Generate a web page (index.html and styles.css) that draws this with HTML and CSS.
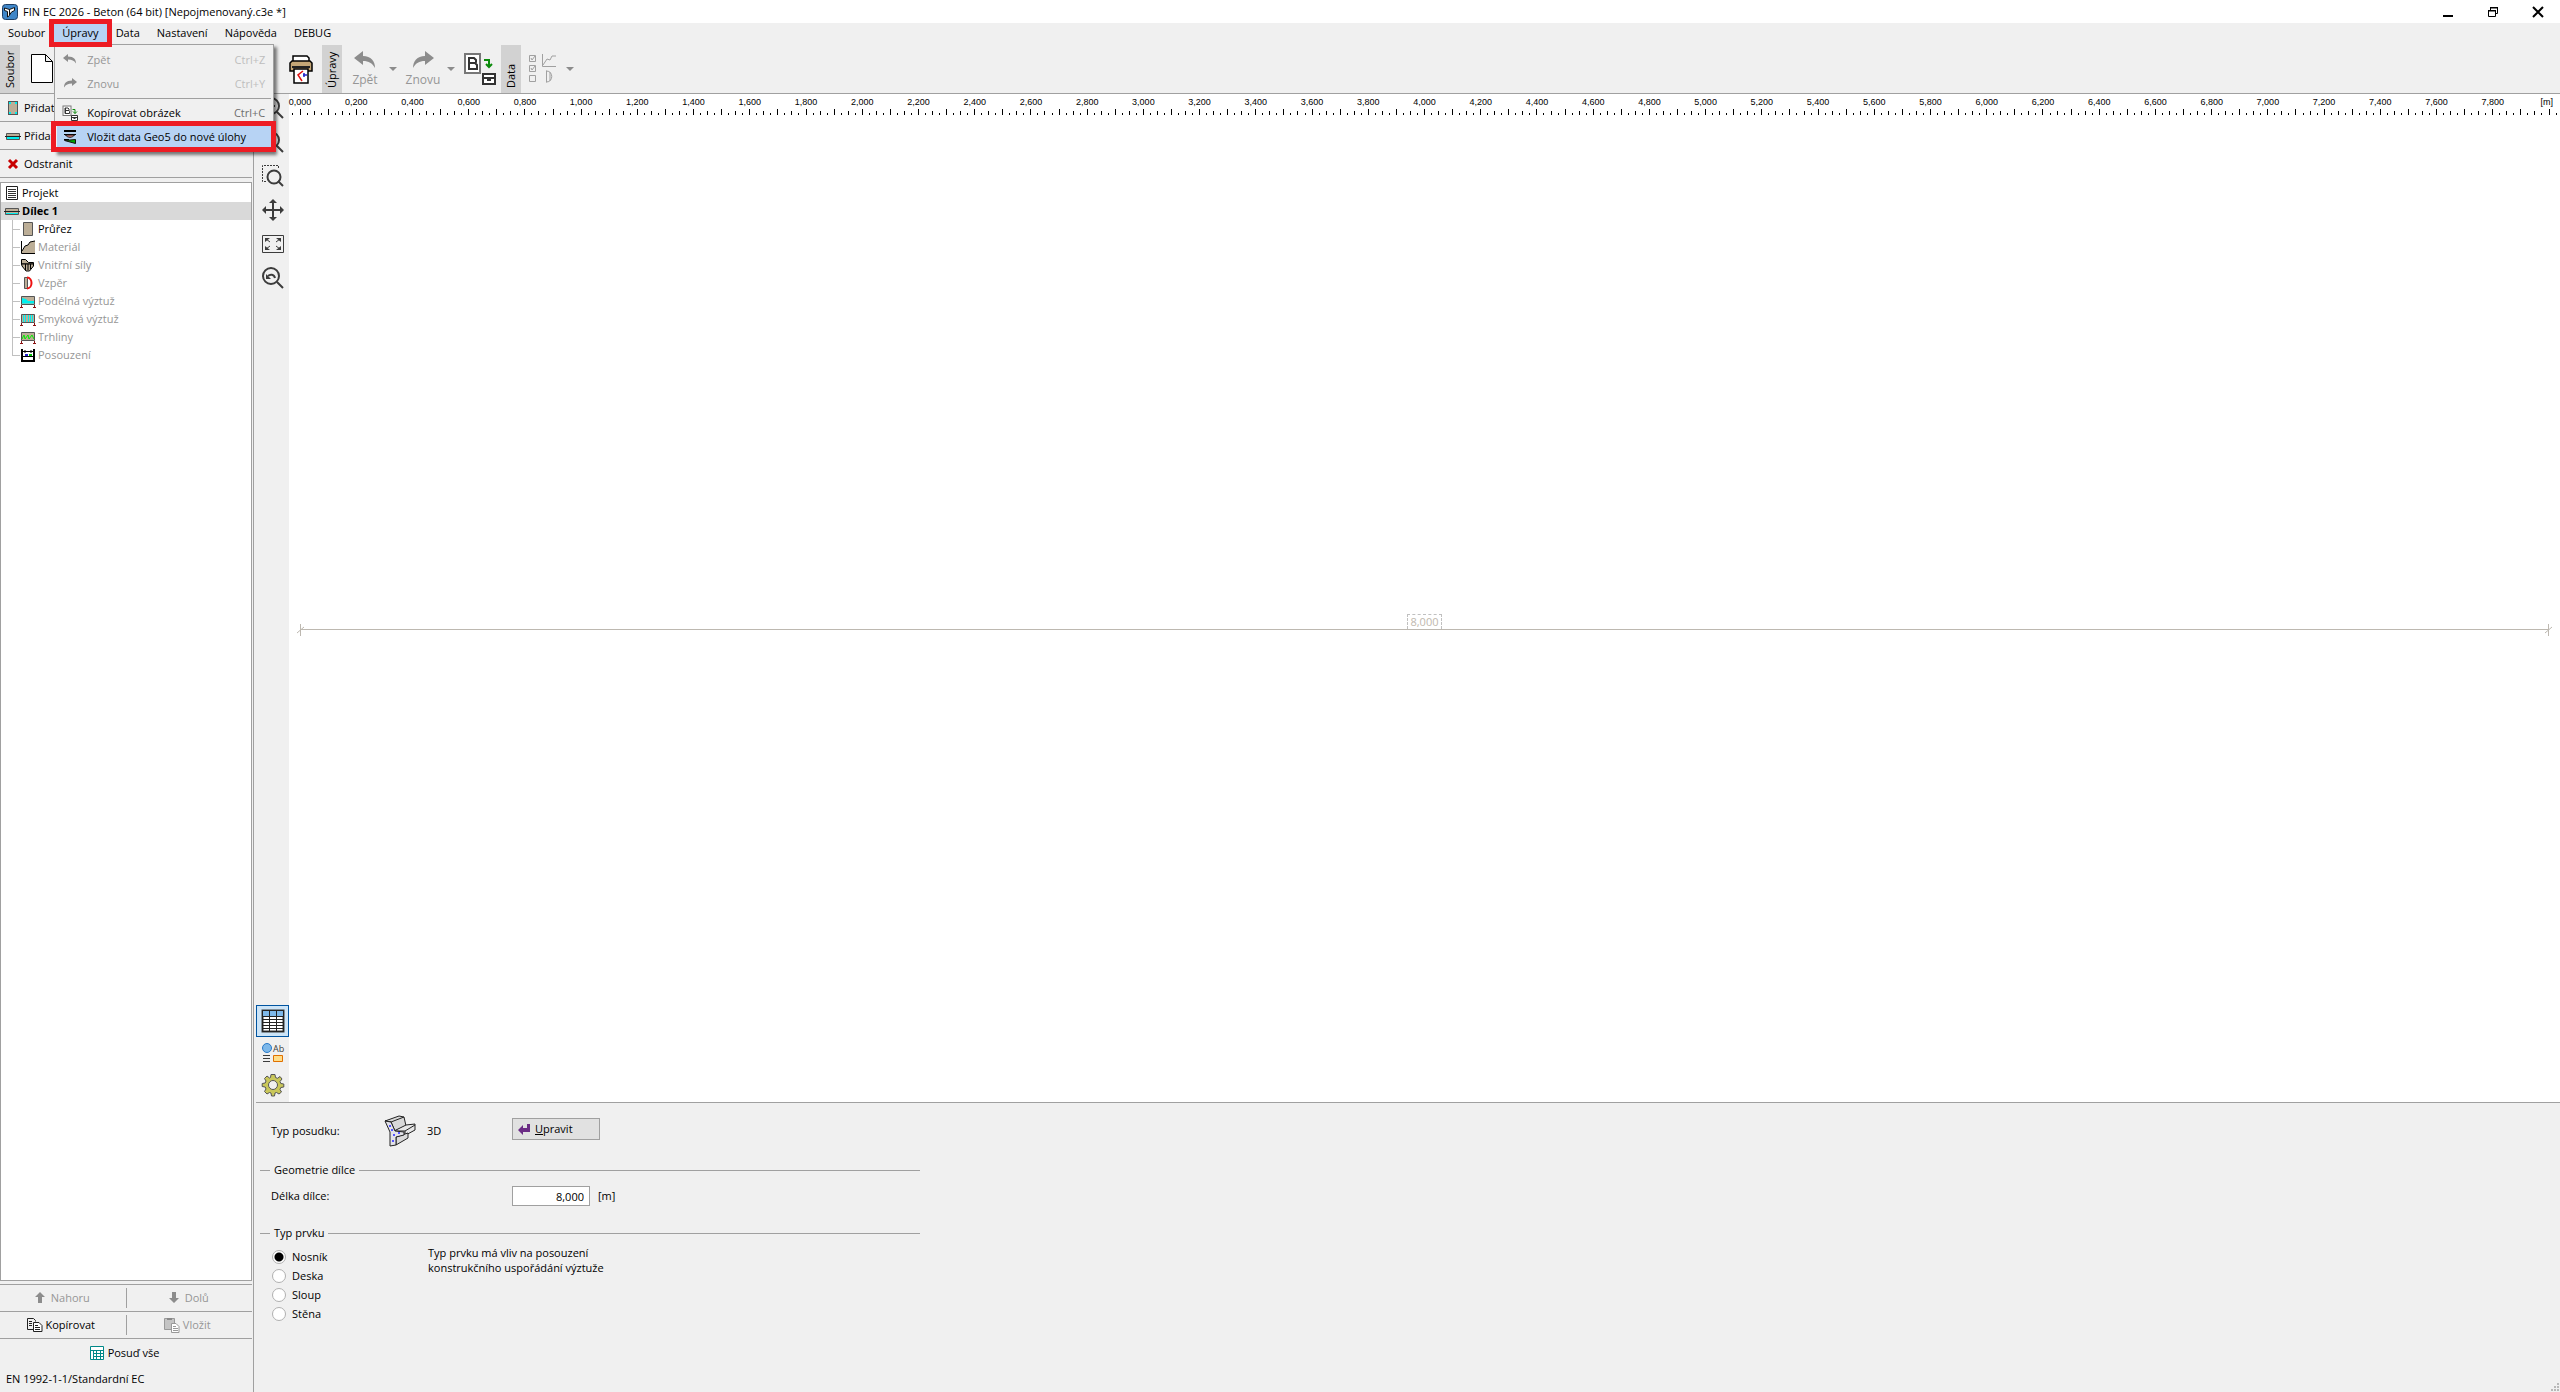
FILE: index.html
```html
<!DOCTYPE html>
<html lang="cs">
<head>
   <meta charset="utf-8">
   <title>FIN EC 2026 - Beton</title>
   <link rel="stylesheet" href="styles.css">
</head>
<body>
   <header class="titlebar">
      <svg class="app-icon" width="16" height="16" viewBox="0 0 16 16"><rect x=".5" y=".5" width="15" height="15" rx="3" fill="#3f86c8" stroke="#1d3f66"/><path d="M2.500 4l5 1.500v6l-2 1.500V7.500l-3-1zM7.500 5.500l5-2v3L9.500 8l-2 3z" fill="#fff" stroke="#111"/></svg>
      <span class="title">FIN EC 2026 - Beton (64 bit) [Nepojmenovaný.c3e *]</span>
      <div class="window-buttons">
         <button aria-label="Minimalizovat"><svg width="12" height="12" viewBox="0 0 12 12"><path d="M1 9h10v2H1z"/></svg></button>
         <button aria-label="Obnovit"><svg width="12" height="12" viewBox="0 0 12 12"><path d="M1.500 4.500h7v6h-7zM3.500 4V1.500h7v6H9" fill="none" stroke="#000"/><path d="M1 4h8v1.500H1zM3 1h8v1.500H3z"/></svg></button>
         <button aria-label="Zavřít"><svg width="12" height="12" viewBox="0 0 12 12"><path d="M1 1l10 10M11 1L1 11" stroke="#000" stroke-width="2"/></svg></button>
      </div>
   </header>

   <nav class="menubar">
      <button>Soubor</button>
      <div class="menu-open">
         <button class="active">Úpravy</button>
         <div class="menu">
            <button class="item" disabled><svg width="16" height="16" viewBox="0 0 16 16"><path d="M1 6l5-4v2.500c6 0 8 3 8 7-2-3-4-4-8-4V10z" fill="#8c8c8c"/></svg>Zpět<kbd>Ctrl+Z</kbd></button>
            <button class="item" disabled><svg width="16" height="16" viewBox="0 0 16 16"><path d="M15 6l-5-4v2.500c-6 0-8 3-8 7 2-3 4-4 8-4V10z" fill="#8c8c8c"/></svg>Znovu<kbd>Ctrl+Y</kbd></button>
            <hr>
            <button class="item"><svg width="16" height="16" viewBox="0 0 32 32"><rect x="2" y="2" width="16" height="19" fill="#fff" stroke="#777" stroke-width="2"/><path d="M6 6h6l2 2v3H7h7l1 2v4H6zM7 6v11" fill="none" stroke="#333" stroke-width="2"/><path d="M21 9h5v8m-4-4l4 4 4-4" fill="none" stroke="#0a8a0a" stroke-width="2"/><path d="M19 21h12v10H19zM19 25h12M23 27h4" fill="#fff" stroke="#333" stroke-width="2"/></svg>Kopírovat obrázek<kbd>Ctrl+C</kbd></button>
            <button class="item chosen"><svg width="16" height="16" viewBox="0 0 16 16"><path d="M2 1h12v2H2zM2 5h12v1H2zM2 10h5v1H2z"/><path d="M3.500 6c2 3 7 3 9 0z" fill="#e88" stroke="#111"/><path d="M2.500 11.500l11 3v-4z" fill="#0a0" stroke="#111"/></svg>Vložit data Geo5 do nové úlohy</button>
         </div>
         <div class="frame frame-menu"></div>
         <div class="frame frame-item"></div>
      </div>
      <button>Data</button>
      <button>Nastavení</button>
      <button>Nápověda</button>
      <button>DEBUG</button>
   </nav>

   <div class="toolbar">
      <span class="tab">Soubor</span>
      <button class="tool-new" aria-label="Nový"><svg width="24" height="32" viewBox="0 0 24 32"><path d="M1.500 1.500h14l7 7v21h-21zM15.500 1.500v7h7" fill="#fff" stroke="#000"/></svg></button>
      <button class="tool-print" aria-label="Tisk"><svg width="24" height="30" viewBox="0 0 24 30"><path d="M4 8V2h14l2 2v4" fill="#fff" stroke="#000" stroke-width="1.500"/><path d="M1 9l2-2h18l2 2v8H1z" fill="#c4a676" stroke="#000" stroke-width="1.500"/><path d="M3 12h18v2H3z" fill="#222"/><path d="M5 15h14v14H5z" fill="#fff" stroke="#000" stroke-width="1.500"/><path d="M14 17l-5 4 4 6" fill="none" stroke="#e01010" stroke-width="1.500"/><path d="M14 21h4M15 19v4" stroke="#22c" stroke-width="1.500"/></svg></button>
      <span class="tab">Úpravy</span>
      <button class="tool" disabled><svg width="24" height="20" viewBox="0 0 24 20"><path d="M1 8l9-7v5c8 0 12 5 12 12-3-5-6-7-12-7v4z" fill="#8c8c8c"/></svg>Zpět</button>
      <span class="caret"></span>
      <button class="tool" disabled><svg width="24" height="20" viewBox="0 0 24 20"><path d="M23 8l-9-7v5C6 6 2 11 2 18c3-5 6-7 12-7v4z" fill="#8c8c8c"/></svg>Znovu</button>
      <span class="caret"></span>
      <button class="tool-copy" aria-label="Kopírovat obrázek"><svg width="32" height="32" viewBox="0 0 32 32"><rect x="1" y="1" width="15" height="19" fill="#fff" stroke="#777" stroke-width="2"/><path d="M5 5h5l2 2v2l-1 1 2 2v4H5zM6 10h5" fill="none" stroke="#333" stroke-width="2"/><path d="M20 7h5v7m-3-3l3 3 3-3" fill="none" stroke="#0a8a0a" stroke-width="2"/><path d="M19 21h12v10H19zM19 25h12M23 27h4" fill="#fff" stroke="#333" stroke-width="2"/></svg></button>
      <span class="tab">Data</span>
      <button class="tool-data" disabled aria-label="Data"><svg width="28" height="32" viewBox="0 0 28 32"><path d="M1.500 2.500h6v6h-6zM1.500 12.500h6v6h-6zM1.500 22.500h6v6h-6zM3 5l1 2 3-4M3 15l1 2 3-4M14.500 1v12.500H28M15 12l4-6 3 1 2-4h4M18.500 17.500v12M18.500 18c7 0 7 11 0 11M22 19v9" fill="none" stroke="#a0a0a0"/></svg></button>
      <span class="caret"></span>
   </div>

   <div class="main">
      <aside class="sidebar">
         <div class="commands">
            <button><svg width="16" height="16" viewBox="0 0 16 16"><rect x="3.500" y="1.500" width="9" height="13" fill="#bcae97" stroke="#555"/><path d="M4 3h2M10 3h2M4 13h2M10 13h2" stroke="#0ee" stroke-width="2"/></svg>Přidat</button>
            <button><svg width="16" height="16" viewBox="0 0 16 16"><path d="M1.500 5.500h13v6h-13z" fill="#bcae97" stroke="#555"/><path d="M2 10h12" stroke="#0ee" stroke-width="2"/><path d="M0 8.500h16" stroke="#222"/></svg>Přidat</button>
            <button><svg width="16" height="16" viewBox="0 0 16 16"><path d="M4 4l8 8M12 4l-8 8" stroke="#c80000" stroke-width="3"/></svg>Odstranit</button>
         </div>
         <ul class="tree">
            <li><svg width="16" height="16" viewBox="0 0 16 16"><path d="M2.500 1.500h11v13h-11z" fill="#fff" stroke="#222"/><path d="M4 4.500h8M4 6.500h8M4 8.500h8M4 10.500h8M4 12.500h8" stroke="#333"/></svg>Projekt</li>
            <li class="selected"><svg width="16" height="16" viewBox="0 0 16 16"><path d="M1.500 5.500h13v6h-13z" fill="#bcae97" stroke="#555"/><path d="M2 10.500h12" stroke="#0ee"/><path d="M0 8.500h16" stroke="#222"/></svg>Dílec 1</li>
            <li class="child ready"><svg width="16" height="16" viewBox="0 0 16 16"><path d="M3.500 1.500h9v13h-9z" fill="#bcae97" stroke="#555"/></svg>Průřez</li>
            <li class="child"><svg width="16" height="16" viewBox="0 0 16 16"><path d="M2 14V12l3-5 3-1 2-3 5-1v12z" fill="#bcae97"/><path d="M1.500 2v12.500H15M2 12l3-5 3-1 2-3 5-1" fill="none" stroke="#000"/></svg>Materiál</li>
            <li class="child"><svg width="16" height="16" viewBox="0 0 16 16"><path d="M1.500 7V2.500h4l3 3h5V7z" fill="#bcae97" stroke="#000"/><path d="M1.500 7h12v2l-4 5H6L2 9z" fill="#bcae97" stroke="#000"/><path d="M5.500 7v6M8 7v6M10.500 7v5" stroke="#000"/></svg>Vnitřní síly</li>
            <li class="child"><svg width="16" height="16" viewBox="0 0 16 16"><path d="M4.500 2.500h3v11h-3z" fill="#bcae97" stroke="#555"/><path d="M7 2.500c6 0 6 11 0 11" fill="none" stroke="#e11" stroke-width="2"/></svg>Vzpěr</li>
            <li class="child"><svg width="16" height="16" viewBox="0 0 16 16"><path d="M1.500 3.500h13v8h-13z" fill="#bcae97" stroke="#555"/><path d="M2 5l4 1 2 2h6v2.500H2z" fill="#0ee"/><path d="M0 14.500h3M13 14.500h3M1.500 12v2M14.500 12v2" stroke="#811"/></svg>Podélná výztuž</li>
            <li class="child"><svg width="16" height="16" viewBox="0 0 16 16"><path d="M1.500 3.500h13v8h-13z" fill="#bcae97" stroke="#555"/><path d="M3.500 4v7M5.500 4v7M8.500 4v7M10.500 4v7M12.500 4v7" stroke="#0ee"/><path d="M0 14.500h3M13 14.500h3M1.500 12v2M14.500 12v2" stroke="#811"/></svg>Smyková výztuž</li>
            <li class="child"><svg width="16" height="16" viewBox="0 0 16 16"><path d="M1.500 3.500h13v8h-13z" fill="#bcae97" stroke="#555"/><path d="M2 10l2-4 1 4 3-4 1 4 3-4 2 4" fill="none" stroke="#0e0"/><path d="M0 14.500h3M13 14.500h3M1.500 12v2M14.500 12v2" stroke="#811"/></svg>Trhliny</li>
            <li class="child"><svg width="16" height="16" viewBox="0 0 16 16"><path d="M2 2v12h12V2" fill="#fff" stroke="#000" stroke-width="2"/><path d="M2 4.500h12M2 9.500h12M5 3v3M11 3v3" stroke="#000"/><path d="M5 8h3" stroke="#22c" stroke-width="2"/><path d="M9 8h3" stroke="#0b0" stroke-width="2"/></svg>Posouzení</li>
         </ul>
         <div class="actions">
            <div class="pair">
               <button disabled><svg width="16" height="16" viewBox="0 0 16 16"><path d="M8 2l5 5h-3v6H6V7H3z" fill="#8c8c8c"/></svg>Nahoru</button>
               <button disabled><svg width="16" height="16" viewBox="0 0 16 16"><path d="M8 13l5-5h-3V2H6v6H3z" fill="#8c8c8c"/></svg>Dolů</button>
            </div>
            <div class="pair">
               <button><svg width="16" height="16" viewBox="0 0 16 16"><path d="M6 12.500H.5v-11h6l2 2v1M2 4.500h3M2 6.500h3M2 8.500h3" fill="none" stroke="#222"/><path d="M6.500 5.500h5.500l3 3v6H6.500z" fill="#fff" stroke="#222"/><path d="M8 8.500h3M8 10.500h5M8 12.500h5" stroke="#222"/></svg>Kopírovat</button>
               <button disabled><svg width="16" height="16" viewBox="0 0 16 16"><path d="M.5 1.500h10v11H.5z" fill="#c4c4c4" stroke="#999"/><path d="M3 1h5v2H3z" fill="#888"/><path d="M7.500 6.500H12l3 3v6H7.500z" fill="#fff" stroke="#999"/><path d="M9 9.500h3M9 11.500h5M9 13.500h5" stroke="#999"/></svg>Vložit</button>
            </div>
            <button class="check-all"><svg width="16" height="16" viewBox="0 0 16 16"><path d="M1.500 1.500h13v13h-13z" fill="#fff" stroke="#088"/><path d="M1 5.500h14M4 8.500h11M4 11.500h11M4.500 5v9M7.500 5v9M11.500 5v9" stroke="#088"/></svg>Posuď vše</button>
         </div>
         <footer class="status">EN 1992-1-1/Standardní EC</footer>
      </aside>

      <section class="workspace">
         <div class="view">
            <div class="view-tools">
               <button aria-label="Přiblížit"><svg width="24" height="24" viewBox="0 0 24 24"><circle cx="10" cy="10" r="8"/><path d="M16 16l6 6M6 10h8M10 6v8"/></svg></button>
               <button aria-label="Oddálit"><svg width="24" height="24" viewBox="0 0 24 24"><circle cx="10" cy="10" r="8"/><path d="M16 16l6 6M6 10h8"/></svg></button>
               <button aria-label="Výřez"><svg width="24" height="24" viewBox="0 0 24 24"><path d="M5 17.500H1.500v-16h16V5" stroke-width="1" stroke-dasharray="2 1"/><circle cx="13" cy="13" r="6.500"/><path d="M17 17l5 5"/></svg></button>
               <button aria-label="Posun"><svg width="24" height="24" viewBox="0 0 24 24"><path d="M12 3v18M3 12h18"/><path class="solid" d="M12 1l4 4H8zM12 23l4-4H8zM1 12l4-4v8zM23 12l-4-4v8z"/></svg></button>
               <button aria-label="Vše"><svg width="24" height="24" viewBox="0 0 24 24"><path d="M1.500 3.500h21v17h-21z" stroke-width="1"/><path d="M5 7l4 3M19 7l-4 3M5 17l4-3M19 17l-4-3" stroke-width="1"/><path class="solid" d="M4 6h5l-5 4zM20 6h-5l5 4zM4 18h5l-5-4zM20 18h-5l5-4z"/></svg></button>
               <button aria-label="Předchozí pohled"><svg width="24" height="24" viewBox="0 0 24 24"><circle cx="10" cy="10" r="8"/><path d="M16 16l6 6M7 10c2-2 6-2 7 2"/><path class="solid" d="M5 8v5h5z"/></svg></button>
               <div class="view-modes">
                  <button class="pressed" aria-label="Tabulky"><svg width="24" height="24" viewBox="0 0 24 24"><path d="M1.500 1.500h21v21h-21z" fill="#fff"/><path d="M2 2h20v5H2z" fill="#7db8ea" stroke="none"/><path d="M1.500 1.500h21v21h-21zM1 7.500h22M1 10.500h22M1 13.500h22M1 16.500h22M1 19.500h22M8.500 1v22M15.500 1v22" fill="none" stroke="#222" stroke-width="1"/></svg></button>
                  <button aria-label="Popisy"><svg width="24" height="24" viewBox="0 0 24 24"><circle cx="6" cy="7" r="4.500" fill="#7db8ea" stroke="#2a7ac8" stroke-width="1"/><text x="12" y="11">Ab</text><path d="M2 14.500h7M2 17.500h7M2 20.500h7" stroke-width="1"/><path d="M12.500 14.500h9v6h-9z" fill="#fd8" stroke="#e07000" stroke-width="1"/></svg></button>
                  <button aria-label="Nastavení zobrazení"><svg width="24" height="24" viewBox="0 0 24 24"><path d="M10 1.500h4l.5 3 2 .8L19 3.500 21 6l-2 2.500.8 2 3 .5v3l-3 .5-.8 2L20.500 19 18 21l-2.500-1.500-1.500.5-.5 3h-3l-.5-3-1.500-.5L6 21 3.500 18.500 5 16l-.8-2-3-.5v-3l3-.5.8-2L3.500 5.500 6 3l2.500 2 1-.5z" fill="#c9c75a" stroke="#555" stroke-width="1"/><circle cx="12" cy="12" r="4.500" fill="#f0f0f0" stroke="#555" stroke-width="1"/></svg></button>
               </div>
            </div>
            <div class="canvas">
               <div class="ruler">
                  <svg id="scale" class="scale"></svg>
                  <span class="unit">[m]</span>
               </div>
               <div class="drawing">
                  <span class="dim-value">8,000</span>
                  <div class="dim-line"><svg width="9" height="12" viewBox="0 0 9 12"><path d="M4.500 0v12M1 9l7-6"/></svg><svg width="9" height="12" viewBox="0 0 9 12"><path d="M4.500 0v12M1 9l7-6"/></svg></div>
               </div>
            </div>
         </div>

         <form class="properties">
            <div class="row row-type">
               <span class="label">Typ posudku:</span>
               <svg width="32" height="32" viewBox="0 0 32 32" stroke="#222" stroke-linejoin="round"><path d="M1 6l14-5 5 1 2 9-11 5-4-9z" fill="#d8d8d8"/><path d="M7 7l13-5M1 6l6 1" fill="none"/><path d="M10 16l12-6 9-1v6l-11 6-9-1z" fill="#e6e6e6"/><path d="M11 16l10 0 10-6M21 16v5" fill="none"/><path d="M12 22l12-4v5l-12 7z" fill="#dadada"/><path d="M1 6l6 1 4 9 9 1v3l-8 2v8l-6 1V17z" fill="#e2e2e8"/><path d="M5 10h2v2H5zM7 14h2v2H7zM9 19h2v2H9zM14 17h2v2h-2zM8 25h2v2H8z" fill="#55f" stroke="none"/></svg>
               <span class="type-name">3D</span>
               <button type="button" class="edit"><svg width="14" height="14" viewBox="0 0 14 14"><path d="M1 8l5-5v3h4V2h3v8H6v3z" fill="#6b2c85"/></svg><span><u>U</u>pravit</span></button>
            </div>
            <fieldset>
               <legend>Geometrie dílce</legend>
               <div class="row row-length">
                  <label class="label" for="length">Délka dílce:</label>
                  <input type="text" id="length" value="8,000">
                  <span>[m]</span>
               </div>
            </fieldset>
            <fieldset>
               <legend>Typ prvku</legend>
               <div class="row row-kind">
                  <div class="kinds">
                     <label><input type="radio" name="kind" checked>Nosník</label>
                     <label><input type="radio" name="kind">Deska</label>
                     <label><input type="radio" name="kind">Sloup</label>
                     <label><input type="radio" name="kind">Stěna</label>
                  </div>
                  <p>Typ prvku má vliv na posouzení<br>konstrukčního uspořádání výztuže</p>
               </div>
            </fieldset>
            <svg class="grip" width="10" height="10" viewBox="0 0 10 10"><path d="M7 1h2v2H7zM7 4h2v2H7zM4 4h2v2H4zM7 7h2v2H7zM4 7h2v2H4zM1 7h2v2H1z" fill="#b8b8b8"/></svg>
         </form>
      </section>
   </div>
   <script src="script.js"></script>
</body>
</html>
```
FILE: styles.css
```css
* { box-sizing: border-box; }
body
{
   display: flex;
   flex-direction: column;
   height: 100vh;
   margin: 0;
   overflow: hidden;
   background: #f0f0f0;
   color: #000;
   font: 11px/16px "Open Sans", "Noto Sans", sans-serif;
}
svg { flex: none; }
button
{
   display: flex;
   align-items: center;
   padding: 0;
   border: 0;
   background: none;
   color: inherit;
   font: inherit;
}
button:disabled { color: #969696; }

/* title bar */
.titlebar
{
   display: flex;
   align-items: center;
   gap: 5px;
   height: 23px;
   padding: 0 16px 0 2px;
   background: #fff;
}
.window-buttons
{
   display: flex;
   gap: 33px;
   margin-left: auto;
}

/* menu */
.menubar
{
   display: flex;
   align-items: center;
   gap: 1px;
   height: 22px;
   padding-bottom: 2px;
}
.menubar > button, .menu-open > button
{
   height: 18px;
   padding: 0 8px;
}
.menu-open { position: relative; }
.menu-open > .active { background: #b7d3f4; }
.menu
{
   position: absolute;
   z-index: 2;
   top: 20px;
   left: 0;
   width: 220px;
   height: 108px;
   padding: 3px 2px;
   border: 1px solid #a0a0a0;
   background: #f0f0f0;
   box-shadow: 3px 3px 3px rgba(0, 0, 0, .5);
}
.menu .item
{
   width: 100%;
   height: 24px;
   padding: 0 6px 0 5px;
   gap: 9px;
}
.menu .chosen { background: #b7d3f4; }
.menu hr
{
   height: 1px;
   margin: 2px 0;
   border: 0;
   background: #a0a0a0;
}
kbd
{
   margin-left: auto;
   color: #6e6e6e;
   font: inherit;
}
.item:disabled kbd { color: #bebebe; }
.frame
{
   position: absolute;
   z-index: 3;
   border: 5px solid #ed1c24;
}
.frame-menu { inset: -5px; }
.frame-item
{
   top: 97px;
   left: -3px;
   width: 225px;
   height: 31px;
}

/* toolbar */
.toolbar
{
   display: flex;
   align-items: center;
   height: 49px;
   border-bottom: 1px solid #a0a0a0;
}
.tab
{
   align-self: stretch;
   width: 20px;
   padding-top: 5px;
   background: #d2d2d2;
   line-height: 20px;
   writing-mode: vertical-rl;
   transform: rotate(180deg);
}
.tool-new { margin-left: 10px; }
.tool-print { margin: 0 9px 0 235px; }
.tool
{
   flex-direction: column;
   width: 46px;
   gap: 2px;
   font-size: 12px;
}
.caret
{
   width: 8px;
   margin: 0 3px 0 1px;
   border: 4px solid transparent;
   border-top-color: #8c8c8c;
   border-bottom: 0;
}
.tool-copy { margin: 0 5px 0 6px; }
.tool-data { margin: 0 9px 0 7px; }

/* left panel */
.main
{
   display: flex;
   flex: 1;
   min-height: 0;
}
.sidebar
{
   display: flex;
   flex-direction: column;
   flex: none;
   width: 254px;
   padding-right: 1px;
   border-right: 1px solid #a0a0a0;
}
.commands button
{
   width: 100%;
   height: 28px;
   padding-left: 5px;
   gap: 3px;
   border-bottom: 1px solid #a0a0a0;
}
.tree
{
   flex: 1;
   margin: 4px 0 3px;
   padding: 1px 0;
   border: 1px solid #a0a0a0;
   background: #fff;
   list-style: none;
}
.tree li
{
   display: flex;
   align-items: center;
   height: 18px;
   padding-left: 3px;
   gap: 2px;
}
.tree .selected
{
   background: #d9d9d9;
   font-weight: bold;
}
.tree .child
{
   position: relative;
   padding-left: 19px;
   color: #969696;
}
.tree .ready { color: #000; }
.child::before, .child::after
{
   position: absolute;
   left: 11px;
   background: #c0c0c0;
   content: "";
}
.child::before
{
   top: 0;
   width: 1px;
   height: 18px;
}
.child:last-child::before { height: 9px; }
.child::after
{
   top: 9px;
   width: 8px;
   height: 1px;
}
.actions { border-top: 1px solid #a0a0a0; }
.actions button
{
   flex: 1;
   justify-content: center;
   padding-right: 4px;
   gap: 3px;
}
.pair
{
   display: flex;
   height: 27px;
   padding: 3px 0;
   border-bottom: 1px solid #a0a0a0;
}
.pair button + button { border-left: 1px solid #a0a0a0; }
.actions .check-all
{
   width: 100%;
   height: 28px;
}
.status
{
   height: 25px;
   padding: 4px 0 0 6px;
}

/* drawing area */
.workspace
{
   display: flex;
   flex-direction: column;
   flex: 1;
   min-width: 0;
   padding-left: 2px;
}
.view
{
   display: flex;
   flex: 1;
   border-bottom: 1px solid #a0a0a0;
}
.view-tools
{
   display: flex;
   flex-direction: column;
   align-items: center;
   width: 33px;
   padding: 2px 0 1px;
   gap: 10px;
}
.view-tools svg
{
   fill: none;
   stroke: #3c3c3c;
   stroke-width: 2;
}
.view-tools .solid
{
   fill: #3c3c3c;
   stroke: none;
}
.view-tools text
{
   fill: #3c3c3c;
   stroke: none;
   font-size: 9px;
}
.view-modes { margin-top: auto; }
.view-modes button
{
   justify-content: center;
   width: 33px;
   height: 32px;
}
.view-modes .pressed
{
   border: 1px solid #0054a0;
   background: #cce4f7;
}
.canvas
{
   display: flex;
   flex-direction: column;
   flex: 1;
   background: #fff;
}
.ruler
{
   position: relative;
   height: 24px;
   padding: 0 11px;
   font: 9px/12px "Liberation Sans", Arial, sans-serif;
}
.scale
{
   display: block;
   width: 100%;
   height: 24px;
   overflow: visible;
}
.scale line
{
   stroke: #000;
   shape-rendering: crispEdges;
}
.scale text { text-anchor: middle; }
.unit
{
   position: absolute;
   top: 2px;
   right: 7px;
}
.drawing
{
   display: flex;
   flex: 1;
   flex-direction: column;
   align-items: center;
   padding: 496px 11px 0;
}
.dim-value
{
   padding: 0 2px;
   border: 1px dashed #c0c0c0;
   border-bottom: 0;
   color: #c0b8ae;
   line-height: 14px;
}
.dim-line
{
   display: flex;
   align-items: center;
   justify-content: space-between;
   align-self: stretch;
   height: 1px;
   background: #bdb8b0;
}
.dim-line svg
{
   margin: 0 -4px;
   fill: none;
   stroke: #bdb8b0;
}

/* properties of the member */
.properties
{
   position: relative;
   display: flex;
   flex-direction: column;
   height: 289px;
   padding: 9px 0 0 4px;
}
.row
{
   display: flex;
   align-items: center;
   padding-left: 11px;
}
.label { width: 113px; }
.row-type { height: 37px; }
.type-name
{
   width: 96px;
   padding-left: 11px;
}
.edit
{
   width: 88px;
   height: 22px;
   margin-bottom: 4px;
   padding-left: 4px;
   gap: 4px;
   border: 1px solid #a0a0a0;
   background: #e1e1e1;
}
fieldset
{
   width: 660px;
   min-width: 0;
   margin: 13px 0 0;
   padding: 0;
   border: 0;
   border-top: 1px solid #a0a0a0;
}
legend
{
   margin-left: 10px;
   padding: 0 4px;
}
.row-length
{
   height: 34px;
   padding-top: 2px;
   gap: 8px;
}
.row-length .label { width: 233px; }
.row-length input
{
   width: 78px;
   height: 20px;
   padding: 0 5px;
   border: 1px solid #a0a0a0;
   background: #fff;
   font: inherit;
   text-align: right;
}
.row-kind
{
   align-items: flex-start;
   padding: 4px 0 0 12px;
}
.kinds
{
   display: flex;
   flex-direction: column;
   width: 156px;
   padding-top: 4px;
   gap: 3px;
}
.kinds label
{
   display: flex;
   align-items: center;
   gap: 6px;
}
.kinds input
{
   appearance: none;
   width: 14px;
   height: 14px;
   margin: 0;
   border: 1px solid #b0b0b0;
   border-radius: 50%;
   background: #fff;
}
.kinds input:checked { background: radial-gradient(#000 4px, #fff 5px); }
.row-kind p
{
   margin: 0;
   line-height: 15px;
}
.grip
{
   position: absolute;
   right: 0;
   bottom: 0;
}
```
FILE: script.js
```js
// ruler: 0 to 8 m, a label every 0,2 m, a tick every 0,025 m
var scale = document.getElementById('scale');
var ns = 'http://www.w3.org/2000/svg';

for (var i = -1; i <= 321; i++) {
   var x = i / 320 * 100 + '%';
   var line = document.createElementNS(ns, 'line');
   line.setAttribute('x1', x);
   line.setAttribute('x2', x);
   line.setAttribute('y1', i % 4 == 0 ? 15 : i % 2 == 0 ? 17 : 19);
   line.setAttribute('y2', 21);
   scale.appendChild(line);

   if (i % 8 == 0 && i < 320) {
      var text = document.createElementNS(ns, 'text');
      text.setAttribute('x', x);
      text.setAttribute('y', 11);
      text.textContent = (i / 40).toFixed(3).replace('.', ',');
      scale.appendChild(text);
   }
}
```
